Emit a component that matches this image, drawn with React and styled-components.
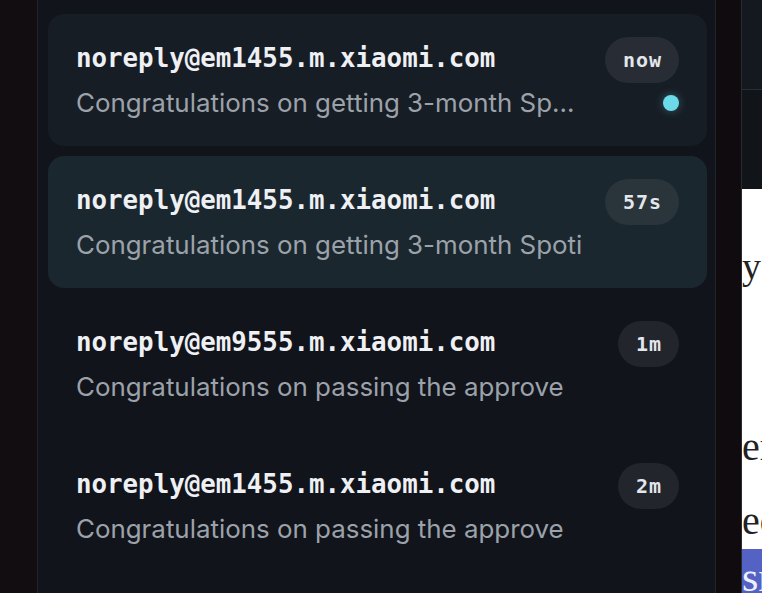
import React from "react";
import styled, { createGlobalStyle } from "styled-components";

const Global = createGlobalStyle`
  html, body { margin: 0; padding: 0; background: #120d11; }
  body { overflow: hidden; }
  #root { height: 593px; }
`;

const Screen = styled.div`
  display: flex;
  height: 593px;
  width: 762px;
  overflow: hidden;
`;

const Gutter = styled.div`
  flex: 0 0 ${(p) => p.$w}px;
  box-sizing: border-box;
  background: ${(p) => p.$bg};
  border-right: 1px solid ${(p) => p.$line};
`;

const Inbox = styled.div`
  flex: 0 0 678px;
  background: #11141b;
  border-right: 1px solid #23252c;
  padding: 14px 8px 0 10px;
  box-sizing: border-box;
  display: flex;
  flex-direction: column;
  gap: 10px;
  overflow: hidden;
`;

const tones = {
  unread: "#171d25",
  active: "#1b272e",
  plain: "transparent",
};

const badgeTones = {
  unread: "#282d35",
  active: "#2a343b",
  plain: "#22252c",
};

const Item = styled.div`
  flex: 0 0 132px;
  box-sizing: border-box;
  width: 659px;
  border-radius: 16px;
  background: ${(p) => tones[p.$tone]};
  padding: 23px 28px 0 28px;
  display: grid;
  grid-template-columns: 1fr auto;
  grid-template-rows: 46px 32px;
  align-content: start;
  row-gap: 4px;
  column-gap: 12px;
  align-items: center;
`;

const Sender = styled.div`
  font-family: "DejaVu Sans Mono", "Liberation Mono", monospace;
  font-weight: 700;
  font-size: 25.8px;
  color: #eef0f4;
  white-space: nowrap;
  margin-top: -5px;
`;

const Subject = styled.div`
  font-family: Inter, "Noto Sans", sans-serif;
  font-size: 25.9px;
  line-height: 32px;
  color: #9ca2aa;
  white-space: nowrap;
  overflow: hidden;
`;

const Badge = styled.span`
  justify-self: end;
  height: 46px;
  border-radius: 23px;
  padding: 0 17px 0 18px;
  display: inline-flex;
  align-items: center;
  background: ${(p) => badgeTones[p.$tone]};
  font-family: "DejaVu Sans Mono", "Liberation Mono", monospace;
  font-weight: 700;
  font-size: 20px;
  letter-spacing: 1px;
  color: #e3e6ea;
`;

const Dot = styled.span`
  justify-self: end;
  width: 16px;
  height: 16px;
  border-radius: 50%;
  background: #6cdbe9;
  box-shadow: 0 0 8px rgba(108, 219, 233, 0.35);
`;

const Preview = styled.div`
  flex: 1;
  display: flex;
  flex-direction: column;
  overflow: hidden;
`;

const Toolbar = styled.div`
  flex: 0 0 89px;
  background: #141920;
  border-bottom: 1px solid #2a2e35;
`;

const Strip = styled.div`
  flex: 0 0 99px;
  background: #111419;
`;

const Document = styled.div`
  flex: 1;
  background: #ffffff;
  display: flex;
  flex-direction: column;
  font-family: "Liberation Serif", "DejaVu Serif", serif;
  color: #222;
  white-space: nowrap;
  overflow: hidden;
`;

const DocLine = styled.div`
  font-size: ${(p) => p.$size}px;
  line-height: 1;
  margin-top: ${(p) => p.$top}px;
`;

const Banner = styled.div`
  margin-top: auto;
  height: 44px;
  background: #5462c4;
  color: #eef0ff;
  font-size: 42px;
  line-height: 56px;
  overflow: hidden;
`;

const mails = [
  {
    from: "noreply@em1455.m.xiaomi.com",
    subject: "Congratulations on getting 3-month Sp...",
    time: "now",
    tone: "unread",
  },
  {
    from: "noreply@em1455.m.xiaomi.com",
    subject: "Congratulations on getting 3-month Spoti",
    time: "57s",
    tone: "active",
  },
  {
    from: "noreply@em9555.m.xiaomi.com",
    subject: "Congratulations on passing the approve",
    time: "1m",
    tone: "plain",
  },
  {
    from: "noreply@em1455.m.xiaomi.com",
    subject: "Congratulations on passing the approve",
    time: "2m",
    tone: "plain",
  },
];

export default function App() {
  return (
    <>
      <Global />
      <Screen>
        <Gutter $w={38} $bg="#120d11" $line="#24232a" />
        <Inbox>
          {mails.map((m, i) => (
            <Item key={i} $tone={m.tone}>
              <Sender>{m.from}</Sender>
              <Badge $tone={m.tone}>{m.time}</Badge>
              <Subject>{m.subject}</Subject>
              {m.tone === "unread" ? <Dot /> : <span />}
            </Item>
          ))}
        </Inbox>
        <Gutter $w={26} $bg="#0f0b0e" $line="#2a2a30" />
        <Preview>
          <Toolbar />
          <Strip />
          <Document>
            <DocLine $size={38} $top={58}>your</DocLine>
            <DocLine $size={40} $top={142}>enter</DocLine>
            <DocLine $size={40} $top={34}>eccess</DocLine>
            <Banner>snap</Banner>
          </Document>
        </Preview>
      </Screen>
    </>
  );
}
